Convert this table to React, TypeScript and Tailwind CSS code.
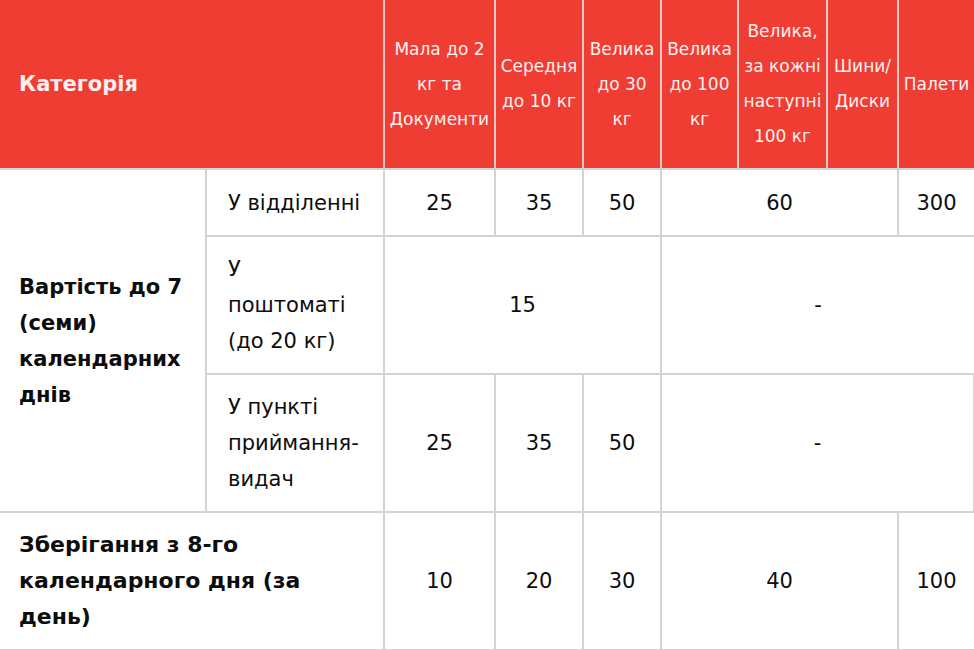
const head = "bg-[#f03d34] text-[#fdf1ef] text-[17px] leading-[35px] text-center align-middle border-x-2 border-[#e2c9c6] px-1 whitespace-nowrap";
const cell = "border-2 border-[#d3d3d3] text-center align-middle";
const sub = "border-2 border-[#d3d3d3] text-left align-middle pl-[21px] pr-2";

function App() {
  return (
    <div className="w-[974px] h-[650px] overflow-hidden bg-white font-['DejaVu_Sans',Verdana,sans-serif] text-[#0d0d0d] text-[21px] leading-[36px]">
      <table className="table-fixed border-collapse w-[974px]">
        <colgroup>
          <col className="w-[206px]" />
          <col className="w-[178px]" />
          <col className="w-[111px]" />
          <col className="w-[88px]" />
          <col className="w-[78px]" />
          <col className="w-[77px]" />
          <col className="w-[89px]" />
          <col className="w-[71px]" />
          <col className="w-[76px]" />
        </colgroup>
        <thead>
          <tr className="h-[169px]">
            <th colSpan={2} className="bg-[#f03d34] text-[#fdf1ef] text-left align-middle pl-[19px] text-[21px] font-bold border-r-2 border-[#e2c9c6]">
              Категорія
            </th>
            <th className={head + " font-normal"}>
              Мала до 2<br />кг та<br />Документи
            </th>
            <th className={head + " font-normal"}>
              Середня<br />до 10 кг
            </th>
            <th className={head + " font-normal"}>
              Велика<br />до 30<br />кг
            </th>
            <th className={head + " font-normal"}>
              Велика<br />до 100<br />кг
            </th>
            <th className={head + " font-normal"}>
              Велика,<br />за кожні<br />наступні<br />100 кг
            </th>
            <th className={head + " font-normal"}>
              Шини/<br />Диски
            </th>
            <th className={head + " font-normal border-r-0"}>Палети</th>
          </tr>
        </thead>
        <tbody>
          <tr className="h-[67px]">
            <td rowSpan={3} className="border-y-2 border-r-2 border-[#d3d3d3] align-middle pl-[19px] font-bold">
              Вартість до 7<br />(семи)<br />календарних<br />днів
            </td>
            <td className={sub}>У відділенні</td>
            <td className={cell}>25</td>
            <td className={cell}>35</td>
            <td className={cell}>50</td>
            <td colSpan={3} className={cell}>60</td>
            <td className={cell + " border-r-0"}>300</td>
          </tr>
          <tr className="h-[138px]">
            <td className={sub}>
              У<br />поштоматі<br />(до 20 кг)
            </td>
            <td colSpan={3} className={cell}>15</td>
            <td colSpan={4} className={cell + " border-r-0"}>-</td>
          </tr>
          <tr className="h-[138px]">
            <td className={sub}>
              У пункті<br />приймання-<br />видач
            </td>
            <td className={cell}>25</td>
            <td className={cell}>35</td>
            <td className={cell}>50</td>
            <td colSpan={4} className={cell}>-</td>
          </tr>
          <tr className="h-[138px]">
            <td colSpan={2} className="border-y-2 border-r-2 border-[#d3d3d3] align-middle pl-[19px] font-bold text-[22px]">
              Зберігання з 8-го<br />календарного дня (за<br />день)
            </td>
            <td className={cell}>10</td>
            <td className={cell}>20</td>
            <td className={cell}>30</td>
            <td colSpan={3} className={cell}>40</td>
            <td className={cell + " border-r-0"}>100</td>
          </tr>
        </tbody>
      </table>
    </div>
  );
}

export default App;
